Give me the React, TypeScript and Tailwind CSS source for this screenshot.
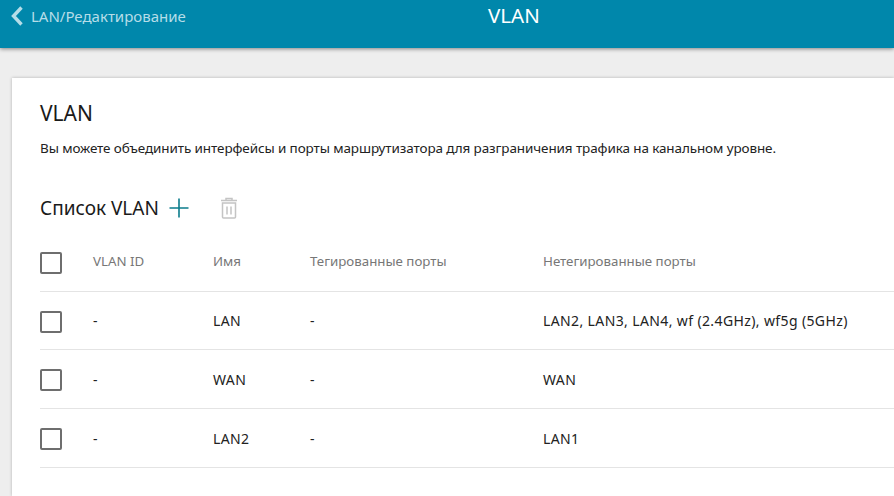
const rows = [
  { id: '-', name: 'LAN', tagged: '-', untagged: 'LAN2, LAN3, LAN4, wf (2.4GHz), wf5g (5GHz)', h: 'h-[58px]' },
  { id: '-', name: 'WAN', tagged: '-', untagged: 'WAN', h: 'h-[59px]' },
  { id: '-', name: 'LAN2', tagged: '-', untagged: 'LAN1', h: 'h-[59px]' },
]

function Checkbox() {
  return <div className="mt-[2px] h-[22px] w-[22px] shrink-0 rounded-[2px] border-2 border-[#6e6e6e] bg-white" />
}

export default function App() {
  return (
    <div className="flex h-[496px] w-[894px] flex-col overflow-hidden bg-[#eeeeee] font-['Noto_Sans',sans-serif]">
      <header className="z-10 flex h-[48px] shrink-0 items-start bg-[#0087ab] shadow-[0_1px_4px_rgba(0,0,0,0.45)]">
        <div className="flex w-[300px] items-center pl-[10px] pt-[5px] text-[#b5dde8]">
          <svg width="14" height="22" viewBox="0 0 14 22" fill="none" stroke="currentColor" strokeWidth="3.4">
            <path d="M11.5 2.5 3.5 11l8 8.5" />
          </svg>
          <span className="ml-[7px] text-[15px] leading-[22px]">LAN/Редактирование</span>
        </div>
        <div className="ml-[188px] pt-[2px] text-[20.5px] leading-[26px] text-white">VLAN</div>
      </header>

      <main className="flex-1 pl-[12px] pt-[30px]">
        <div className="h-full bg-white pl-[28px] pt-[21px] shadow-[0_0_3px_rgba(0,0,0,0.25)]">
          <h1 className="text-[21px] leading-[28px] text-[#1a1a1a]">VLAN</h1>
          <p className="mt-[11px] text-[13.47px] leading-[20px] tracking-[-0.1px] text-[#222222]">
            Вы можете объединить интерфейсы и порты маршрутизатора для разграничения трафика на канальном уровне.
          </p>

          <div className="mt-[34px] flex h-[32px] items-center">
            <h2 className="text-[19px] text-[#1a1a1a]">Список VLAN</h2>
            <svg className="ml-[10px]" width="20" height="20" viewBox="0 0 20 20" stroke="#0b7c8c" strokeWidth="1.6" fill="none">
              <path d="M10 0.5v19M0.5 10h19" />
            </svg>
            <svg className="ml-[31px]" width="18" height="22" viewBox="0 0 18 22" fill="none" stroke="#c4c4c4" strokeWidth="1.5">
              <path d="M6 3V1.5h6V3M1 3.5h16M2.5 6h13v14a1 1 0 0 1-1 1h-11a1 1 0 0 1-1-1z" />
              <path d="M7 9.5v8M11 9.5v8" />
            </svg>
          </div>

          <div className="mt-[9px] w-[854px]">
            <div className="flex h-[59px] items-center border-b border-[#e4e4e4] text-[13.3px] text-[#777777]">
              <Checkbox />
              <div className="ml-[31px] w-[120px]">VLAN ID</div>
              <div className="w-[97px]">Имя</div>
              <div className="w-[233px]">Тегированные порты</div>
              <div>Нетегированные порты</div>
            </div>
            {rows.map((row) => (
              <div key={row.name} className={`flex items-center border-b border-[#e4e4e4] text-[14px] tracking-[0.38px] text-[#222222] ${row.h}`}>
                <Checkbox />
                <div className="ml-[31px] w-[120px]">{row.id}</div>
                <div className="w-[97px]">{row.name}</div>
                <div className="w-[233px]">{row.tagged}</div>
                <div>{row.untagged}</div>
              </div>
            ))}
          </div>
        </div>
      </main>
    </div>
  )
}
